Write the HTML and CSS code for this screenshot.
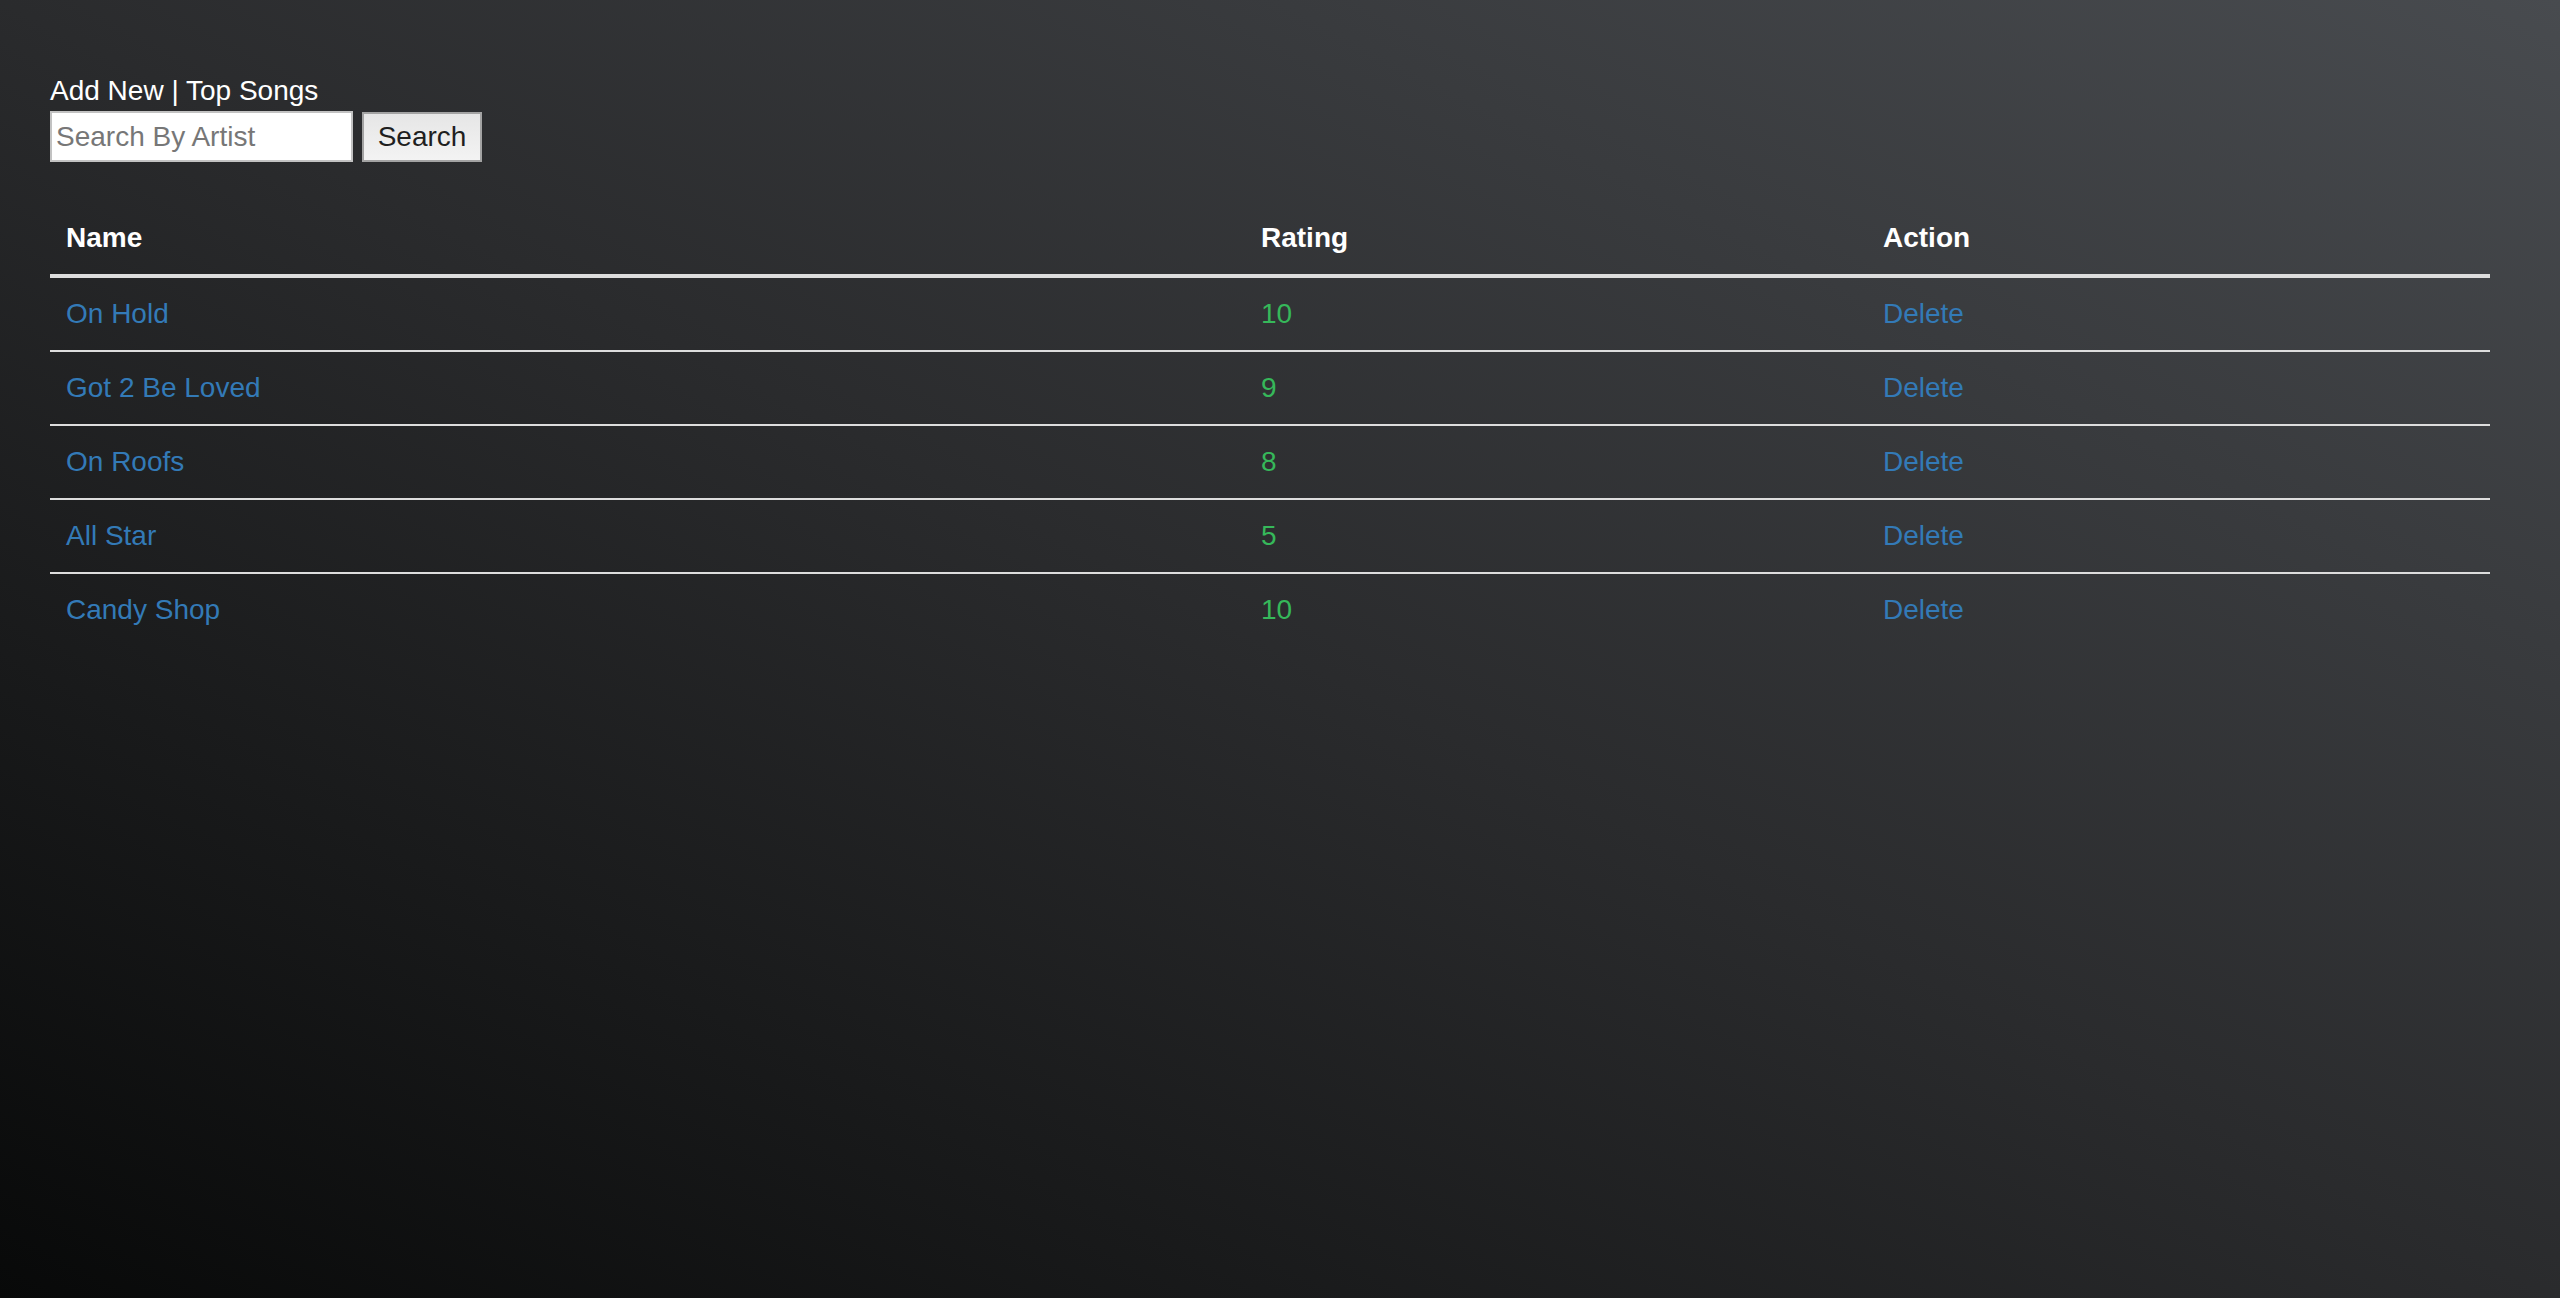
FILE: index.html
```html
<!DOCTYPE html>
<html lang="en">
<head>
<meta charset="utf-8">
<title>Songs</title>
<link rel="stylesheet" href="styles.css">
</head>
<body>
<div class="page">
  <div class="nav"><a class="nav-link" href="#">Add New</a> | <a class="nav-link" href="#">Top Songs</a></div>
  <form class="search-form">
    <input class="search-input" type="text" placeholder="Search By Artist">
    <button class="search-btn" type="button">Search</button>
  </form>
  <table class="songs">
    <colgroup>
      <col class="col-name">
      <col class="col-rating">
      <col class="col-action">
    </colgroup>
    <thead>
      <tr><th>Name</th><th>Rating</th><th>Action</th></tr>
    </thead>
    <tbody>
      <tr><td><a class="song" href="#">On Hold</a></td><td class="rating">10</td><td><a class="song" href="#">Delete</a></td></tr>
      <tr><td><a class="song" href="#">Got 2 Be Loved</a></td><td class="rating">9</td><td><a class="song" href="#">Delete</a></td></tr>
      <tr><td><a class="song" href="#">On Roofs</a></td><td class="rating">8</td><td><a class="song" href="#">Delete</a></td></tr>
      <tr><td><a class="song" href="#">All Star</a></td><td class="rating">5</td><td><a class="song" href="#">Delete</a></td></tr>
      <tr><td><a class="song" href="#">Candy Shop</a></td><td class="rating">10</td><td><a class="song" href="#">Delete</a></td></tr>
    </tbody>
  </table>
</div>
</body>
</html>
```

FILE: styles.css
```css
html, body {
  margin: 0;
  padding: 0;
  height: 100%;
}

body {
  background: linear-gradient(to top right, #080909 0%, #2a2b2d 50%, #484b4f 100%);
  font-family: "Liberation Sans", Arial, Helvetica, sans-serif;
  font-size: 28px;
  color: #ffffff;
}

.page {
  padding: 72px 70px 0 50px;
}

.nav {
  height: 39px;
  line-height: 37px;
  color: #ffffff;
}

.nav-link {
  color: #ffffff;
  text-decoration: none;
}

.search-form {
  display: flex;
  align-items: flex-end;
  gap: 9px;
  margin: 0;
  height: 51px;
}

.search-input {
  box-sizing: border-box;
  width: 303px;
  height: 51px;
  margin: 0;
  padding: 0 4px;
  border: 2px solid #c2c2c2;
  background: #ffffff;
  font-family: "Liberation Sans", Arial, sans-serif;
  font-size: 28px;
  color: #333;
  outline: none;
}

.search-input::placeholder {
  color: #777777;
}

.search-btn {
  box-sizing: border-box;
  width: 120px;
  height: 50px;
  margin: 0;
  padding: 0;
  border: 2px solid #a3a3a3;
  background: linear-gradient(to bottom, #e6e6e6, #f3f3f3);
  font-family: "Liberation Sans", Arial, sans-serif;
  font-size: 28px;
  color: #1f1f1f;
}

.songs {
  margin-top: 40px;
  width: 2440px;
  table-layout: fixed;
  border-collapse: collapse;
  border-spacing: 0;
}

.col-name { width: 1195px; }
.col-rating { width: 622px; }
.col-action { width: 623px; }

.songs th,
.songs td {
  padding: 16px;
  line-height: 40px;
  text-align: left;
  vertical-align: top;
}

.songs th {
  font-weight: bold;
  color: #ffffff;
  border-bottom: 4px solid #dddddd;
}

.songs td {
  border-top: 2px solid #dddddd;
}

.songs tbody tr:first-child td {
  border-top: 0;
}

.song {
  color: #337ab7;
  text-decoration: none;
}

.rating {
  color: #36b85a;
}
```
